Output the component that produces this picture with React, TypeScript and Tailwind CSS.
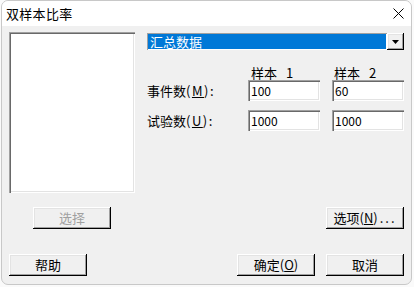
import React from "react";

const font = "font-['SimSun','Noto_Sans_CJK_SC',sans-serif]";

const sunken =
  "bg-white shadow-[inset_1px_1px_0_#a0a0a0,inset_2px_2px_0_#696969,inset_-1px_-1px_0_#ffffff,inset_-2px_-2px_0_#e3e3e3]";

const raised =
  "shadow-[inset_-1px_-1px_0_#000000,inset_1px_1px_0_#ffffff,inset_-2px_-2px_0_#a0a0a0,inset_2px_2px_0_#e3e3e3]";

const Button = ({ children, disabled, className = "" }: { children: React.ReactNode; disabled?: boolean; className?: string }) => (
  <div
    className={`w-[78px] h-[22px] flex items-center justify-center bg-[#f0f0f0] text-[13px] ${raised} ${
      disabled ? "text-[#a0a0a0]" : "text-black"
    } ${className}`}
  >
    {children}
  </div>
);

const Field = ({ value }: { value: string }) => (
  <div className={`w-[72px] h-[21px] flex items-center pl-[3px] text-[12px] text-black ${sunken}`}>{value}</div>
);

export default function App() {
  return (
    <div className={`w-[414px] h-[287px] bg-[#fafafa] ${font}`}>
      <div className="ml-[1px] w-[411px] h-[285px] rounded-[7px] border border-[#c8c8c8] bg-[#f0f0f0] overflow-hidden flex flex-col">
        {/* title bar */}
        <div className="h-[25px] bg-white flex items-center justify-between pl-[4px] pr-[6px]">
          <span className="text-[13px] text-black tracking-[0.3px]">双样本比率</span>
          <svg width="11" height="11" viewBox="0 0 11 11" className="mr-[1px]">
            <path d="M0.5 0.5 L10.5 10.5 M10.5 0.5 L0.5 10.5" stroke="#000" strokeWidth="1" />
          </svg>
        </div>

        <div className="flex flex-col pl-[7px] pt-[6px]">
          <div className="flex">
            <div className={`w-[126px] h-[161px] ${sunken}`} />

            <div className="ml-[12px] w-[257px] pt-[1px] flex flex-col">
              {/* dropdown */}
              <div className="h-[17px] flex bg-white shadow-[inset_1px_1px_0_#a0a0a0,inset_-1px_-1px_0_#ffffff]">
                <div className="flex-1 ml-[1px] mt-[1px] mb-[1px] mr-[1px] bg-[#0078d7] text-white text-[13px] flex items-center pl-[2px]">
                  汇总数据
                </div>
                <div className={`w-[17px] h-[17px] bg-[#f0f0f0] flex items-center justify-center ${raised}`}>
                  <svg width="7" height="4" viewBox="0 0 7 4">
                    <path d="M0 0 H7 L3.5 4 Z" fill="#000" />
                  </svg>
                </div>
              </div>

              {/* column headers */}
              <div className="mt-[13px] h-[17px] flex text-[13px] text-black">
                <div className="w-[101px]" />
                <div className="w-[72px] pl-[3px]">
                  样本<span className="ml-[9px]">1</span>
                </div>
                <div className="w-[72px] ml-[12px] pl-[2px]">
                  样本<span className="ml-[9px]">2</span>
                </div>
              </div>

              <div className="flex flex-col gap-[9px]">
                <div className="flex items-center text-[13px] text-black">
                  <div className="w-[101px]">
                    事件数<span className="tracking-[1.5px]">(<span className="underline">M</span>):</span>
                  </div>
                  <Field value="100" />
                  <div className="ml-[12px]">
                    <Field value="60" />
                  </div>
                </div>
                <div className="flex items-center text-[13px] text-black">
                  <div className="w-[101px]">
                    试验数<span className="tracking-[1.5px]">(<span className="underline">U</span>):</span>
                  </div>
                  <Field value="1000" />
                  <div className="ml-[12px]">
                    <Field value="1000" />
                  </div>
                </div>
              </div>
            </div>
          </div>

          <div className="mt-[14px] flex justify-between w-[395px]">
            <Button disabled className="ml-[24px]">选择</Button>
            <Button>
              选项(<span className="underline">N</span>)<span className="tracking-[2px] ml-[2px]">...</span>
            </Button>
          </div>

          <div className="mt-[25px] flex w-[395px]">
            <Button>帮助</Button>
            <div className="flex-1" />
            <Button>
              确定(<span className="underline">O</span>)
            </Button>
            <Button className="ml-[11px]">取消</Button>
          </div>
        </div>
      </div>
    </div>
  );
}
